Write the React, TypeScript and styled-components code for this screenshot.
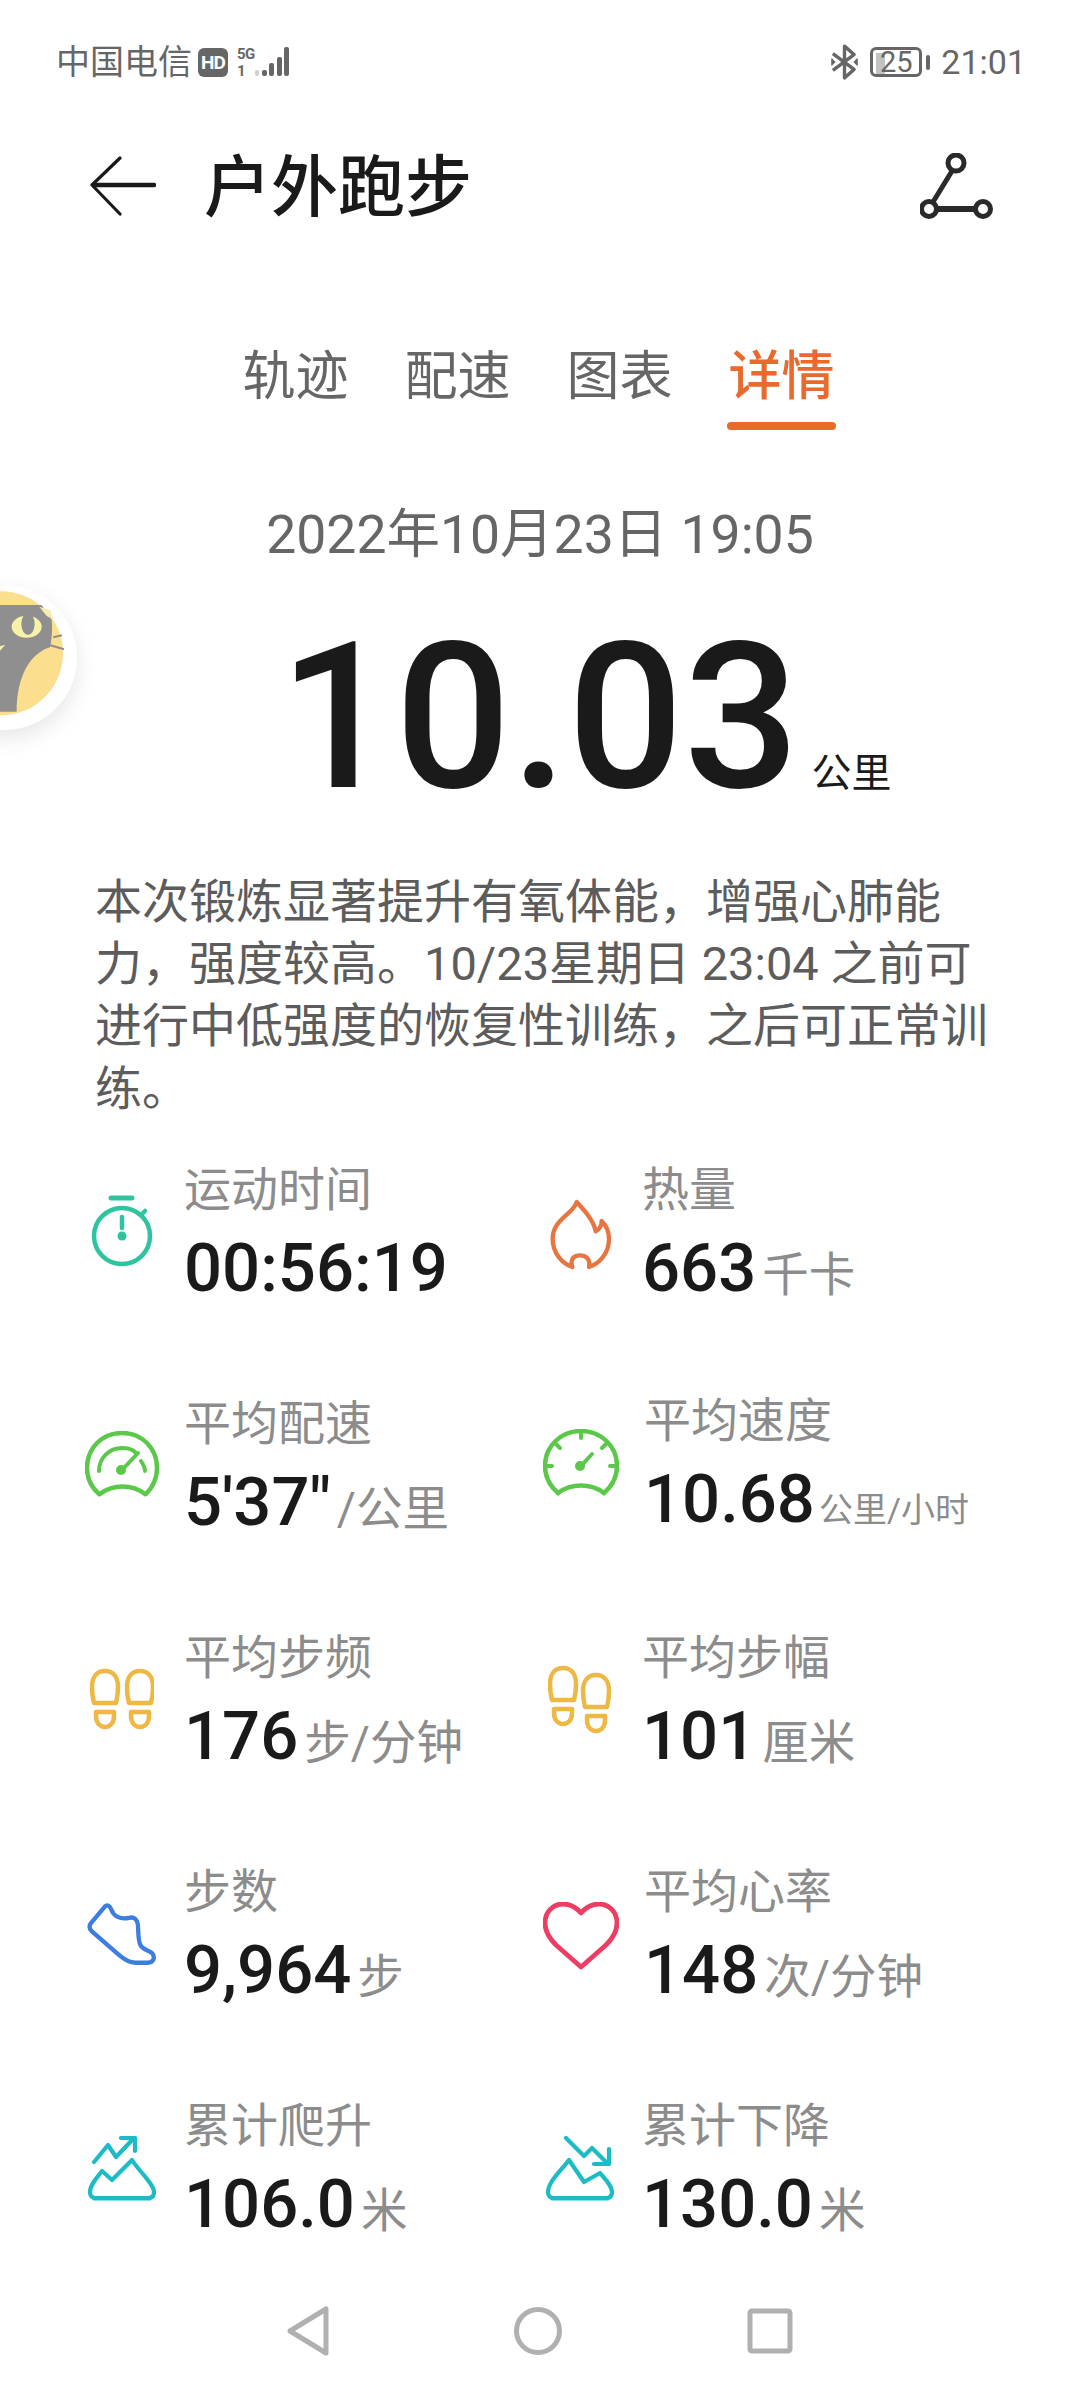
import React from 'react'
import styled, { createGlobalStyle } from 'styled-components'

const GlobalStyle = createGlobalStyle`
    html, body {
        margin: 0;
        padding: 0;
        background: #fff;
    }
    * {
        box-sizing: border-box;
    }
`

const CJK = `Roboto, "Noto Sans CJK SC", sans-serif`

const Page = styled.div`
    position: relative;
    display: flex;
    flex-direction: column;
    width: 1080px;
    height: 2388px;
    overflow: hidden;
    background: #fff;
    font-family: ${CJK};
`

const StatusBar = styled.div`
    display: flex;
    align-items: center;
    justify-content: space-between;
    height: 124px;
    padding: 0 54px 0 56px;
    color: #666;
`

const StatusGroup = styled.div`
    display: flex;
    align-items: center;
`

const Carrier = styled.span`
    font-size: 34px;
    line-height: 40px;
`

const HdBadge = styled.span`
    display: flex;
    align-items: center;
    justify-content: center;
    width: 30px;
    height: 29px;
    margin: 0 9px 0 6px;
    border-radius: 6px;
    background: #666;
    color: #fff;
    font-size: 19px;
    font-weight: 700;
    letter-spacing: -1px;
`

const NetworkStack = styled.span`
    display: flex;
    flex-direction: column;
    justify-content: space-between;
    height: 31px;
    font-size: 15px;
    line-height: 14px;
    font-weight: 700;
    letter-spacing: -0.5px;
`

const Battery = styled.span`
    position: relative;
    display: flex;
    align-items: center;
    justify-content: center;
    width: 52px;
    height: 30px;
    margin-left: 11px;
    border: 3px solid #666;
    border-radius: 6px;
    font-size: 29px;
    line-height: 24px;
`

const BatteryFill = styled.span`
    position: absolute;
    left: 3px;
    top: 3px;
    bottom: 0;
    width: 9px;
    background: #c2c2c2;
`

const BatteryLabel = styled.span`
    position: relative;
`

const BatteryNub = styled.span`
    width: 4px;
    height: 15px;
    margin-left: 4px;
    border-radius: 2px;
    background: #666;
`

const Clock = styled.span`
    margin-left: 11px;
    font-size: 34px;
    line-height: 40px;
`

const Header = styled.div`
    display: flex;
    align-items: center;
    height: 124px;
    padding: 0 86px 0 90px;
`

const Title = styled.h1`
    flex: 1;
    margin: 4px 0 0 48px;
    font-size: 67px;
    line-height: 80px;
    font-weight: 500;
    color: #1a1a1a;
`

const Tabs = styled.div`
    display: flex;
    justify-content: center;
    gap: 56px;
    margin-top: 92px;
    padding-right: 3px;
`

const Tab = styled.div<{ $active?: boolean }>`
    position: relative;
    height: 90px;
    font-size: 53px;
    line-height: 74px;
    font-weight: ${props => (props.$active ? 500 : 400)};
    color: ${props => (props.$active ? '#e96a2c' : '#666')};

    &::after {
        content: '';
        display: ${props => (props.$active ? 'block' : 'none')};
        position: absolute;
        left: -2px;
        right: -1px;
        bottom: 0;
        height: 8px;
        border-radius: 4px;
        background: #e96a2c;
    }
`

const DateLine = styled.div`
    margin-top: 70px;
    text-align: center;
    font-size: 53.5px;
    line-height: 70px;
    color: #666;
`

const Distance = styled.div`
    display: flex;
    align-items: baseline;
    margin-top: 28px;
    padding-left: 279px;
    height: 240px;
`

const DistanceValue = styled.span`
    font-size: 204px;
    line-height: 240px;
    font-weight: 500;
    color: #1a1a1a;
`

const DistanceUnit = styled.span`
    margin-left: 12px;
    font-size: 40px;
    color: #1a1a1a;
`

const Summary = styled.p`
    margin: 33px 0 0;
    padding: 0 86px 0 95px;
    font-size: 47px;
    line-height: 62.2px;
    color: #5c5c5c;
`

const Stats = styled.div`
    display: grid;
    grid-template-columns: 458px 458px;
    grid-template-rows: repeat(4, 234px) auto;
    margin-top: 40px;
    padding-left: 85px;
`

const Stat = styled.div`
    display: flex;
    align-items: flex-start;
    gap: 25px;
`

const IconSlot = styled.div<{ $top: number }>`
    display: flex;
    justify-content: center;
    flex: 0 0 74px;
    margin-top: ${props => props.$top}px;
`

const StatBody = styled.div<{ $shift?: number }>`
    margin-top: ${props => props.$shift ?? 0}px;
`

const StatLabel = styled.div`
    font-size: 47px;
    line-height: 60px;
    color: #8c8c8c;
`

const StatValueRow = styled.div`
    display: flex;
    align-items: baseline;
    margin-top: 8px;
    line-height: 80px;
`

const StatValue = styled.span`
    font-size: 67px;
    font-weight: 500;
    color: #1a1a1a;
`

const StatUnit = styled.span<{ $small?: boolean }>`
    margin-left: ${props => (props.$small ? 4 : 6)}px;
    font-size: ${props => (props.$small ? 34 : 46.5)}px;
    color: #8c8c8c;
`

const NavBar = styled.div`
    position: absolute;
    left: 0;
    right: 0;
    bottom: 32px;
    display: flex;
    justify-content: center;
    align-items: center;
    gap: 185px;
`

const FloatBall = styled.div`
    position: absolute;
    left: -68px;
    top: 585px;
    width: 145px;
    height: 145px;
    border-radius: 50%;
    background: #fff;
    box-shadow: 0 8px 22px rgba(0, 0, 0, 0.1);
    overflow: hidden;

    svg {
        display: block;
    }
`

const Stopwatch = () => (
    <svg width="62" height="72" viewBox="0 0 62 72" fill="none" stroke="#2ec4a0" strokeWidth="4.5" strokeLinecap="round">
        <path d="M20 3h21" strokeWidth="5" />
        <circle cx="31" cy="41" r="28" />
        <path d="M51 19l3-3" />
        <path d="M31 22v11" />
        <circle cx="31" cy="41" r="4.5" fill="#2ec4a0" stroke="none" />
    </svg>
)

const Flame = () => (
    <svg width="70" height="76" viewBox="75 130 210 228" fill="none" stroke="#e8743f" strokeWidth="13" strokeLinejoin="round" strokeLinecap="round">
        <path d="M170 148C160 185 98 200 98 258C98 300 125 332 157 343C150 322 160 308 180 308C200 308 212 322 207 343C240 332 267 300 267 258C267 235 258 218 245 205C245 220 238 230 227 236C222 205 195 175 170 148Z" />
    </svg>
)

const GaugeBold = () => (
    <svg width="74" height="68" viewBox="0 0 74 68" fill="none" stroke="#5bc84a" strokeLinecap="round">
        <path d="M14 63C6 56 2 47 2 37C2 17 17 2 37 2C57 2 72 17 72 37C72 47 68 56 61 63" strokeWidth="4.5" />
        <path d="M15 63C28 53 47 53 60 63" strokeWidth="4.5" />
        <path d="M14 40C14 27 24 17 37 17C42 17 47 18 50 21" strokeWidth="4" />
        <path d="M56 30C58 33 60 36 60 40" strokeWidth="4" />
        <path d="M37 39L53 22" strokeWidth="4" />
        <circle cx="36" cy="39" r="5" fill="#5bc84a" stroke="none" />
    </svg>
)

const GaugeThin = () => (
    <svg width="76" height="68" viewBox="0 0 76 68" fill="none" stroke="#5bc84a" strokeLinecap="round">
        <path d="M15 64C7 57 2 47 2 37C2 17 18 2 38 2C58 2 74 17 74 37C74 47 69 57 61 64" strokeWidth="4.5" />
        <path d="M15 64C28 54 48 54 61 64" strokeWidth="4.5" />
        <path d="M38 3v6M13 15l4 4M63 15l-4 4M3 37h6M73 37h-6" strokeWidth="4" />
        <path d="M38 37L49 25" strokeWidth="4" />
        <circle cx="37" cy="37" r="5" fill="#5bc84a" stroke="none" />
    </svg>
)

const Foot = ({ x, y }: { x: number; y: number }) => (
    <g transform={`translate(${x} ${y})`}>
        <path d="M3 34H25C26 30 27 25 27 18C27 8 22 2 14 2C6 2 1 8 1 18C1 25 2 30 3 34Z" />
        <path d="M5 43H23V47C23 54 19 58 14 58C9 58 5 54 5 47Z" />
    </g>
)

const FootprintsLevel = () => (
    <svg width="64" height="64" viewBox="0 0 64 64" fill="none" stroke="#edb843" strokeWidth="4.5" strokeLinejoin="round">
        <Foot x={1} y={2} />
        <Foot x={36} y={2} />
    </svg>
)

const FootprintsStaggered = () => (
    <svg width="64" height="72" viewBox="0 0 64 72" fill="none" stroke="#edb843" strokeWidth="4.5" strokeLinejoin="round">
        <Foot x={1} y={2} />
        <Foot x={34} y={9} />
    </svg>
)

const Shoe = () => (
    <svg width="72" height="64" viewBox="75 785 218 192" fill="none" stroke="#3b7de0" strokeWidth="13" strokeLinejoin="round" strokeLinecap="round">
        <path d="M90 848L132 798C140 790 148 796 152 808C158 826 178 838 205 832C222 828 230 838 232 852C234 876 232 900 240 915C248 930 262 928 274 938C286 950 280 968 262 968H225C205 968 190 958 172 942L92 872C84 864 84 856 90 848Z" />
    </svg>
)

const Heart = () => (
    <svg width="76" height="68" viewBox="0 0 76 68" fill="none" stroke="#ee3d63" strokeWidth="4.8" strokeLinejoin="round">
        <path d="M38 11C33 5 27 2 20 2C10 2 2 10 2 21C2 30 7 37 13 43L38 65L63 43C69 37 74 30 74 21C74 10 66 2 56 2C49 2 43 5 38 11Z" />
    </svg>
)

const MountainUp = () => (
    <svg width="68" height="66" viewBox="0 0 68 66" fill="none" stroke="#1dbbc5" strokeWidth="4.2" strokeLinecap="round" strokeLinejoin="round">
        <path d="M6 26L20 9L28 21L46 2" />
        <path d="M33 2H47V15" />
        <path d="M2 56C2 49 8 43 14 35L24 44L44 24C50 34 66 48 66 56C66 60 64 62 60 62H8C4 62 2 60 2 56Z" />
        <path d="M6 63H62" strokeWidth="3" />
    </svg>
)

const MountainDown = () => (
    <svg width="68" height="66" viewBox="0 0 68 66" fill="none" stroke="#1dbbc5" strokeWidth="4.2" strokeLinecap="round" strokeLinejoin="round">
        <path d="M20 2L38 20L46 12L62 28" />
        <path d="M48 28H63V13" />
        <path d="M2 56C2 46 14 36 23 24L38 46L54 37C60 44 66 50 66 56C66 60 64 62 60 62H8C4 62 2 60 2 56Z" />
        <path d="M6 63H62" strokeWidth="3" />
    </svg>
)

const BackArrow = () => (
    <svg width="66" height="60" viewBox="0 0 66 60" fill="none" stroke="#1a1a1a" strokeLinecap="round" strokeLinejoin="round">
        <path d="M30 2L2 29L30 58" strokeWidth="3.2" />
        <path d="M4 29H64" strokeWidth="4.6" />
    </svg>
)

const RouteIcon = () => (
    <svg width="74" height="66" viewBox="0 0 74 66" fill="none" stroke="#2a2a2a" strokeWidth="5">
        <circle cx="36" cy="10" r="8" />
        <circle cx="9" cy="56" r="7.5" />
        <circle cx="63" cy="56" r="7.5" />
        <path d="M32 18L13 49" />
        <path d="M17 56H55" strokeWidth="6" />
    </svg>
)

const SignalBars = () => (
    <svg width="34" height="32" viewBox="0 0 34 32" fill="#666">
        <rect x="0" y="24" width="4" height="6" rx="2" fill="#cfcfcf" />
        <rect x="7" y="24" width="5" height="6" rx="2" />
        <rect x="14" y="17" width="5" height="13" rx="2" />
        <rect x="22" y="11" width="5" height="19" rx="2" />
        <rect x="29" y="1" width="5" height="29" rx="2" />
    </svg>
)

const Bluetooth = () => (
    <svg width="29" height="36" viewBox="0 0 26 34" fill="none" stroke="#666" strokeWidth="3.2" strokeLinejoin="round">
        <path d="M2 9L22 24L13 32V2L22 10L2 25" />
        <path d="M1 14l3 3l-3 3z" fill="#666" strokeWidth="1" />
        <path d="M25 14l-3 3l3 3z" fill="#666" strokeWidth="1" />
    </svg>
)

const NavBack = () => (
    <svg width="42" height="50" viewBox="0 0 42 50" fill="none" stroke="#b0b0b0" strokeWidth="5" strokeLinejoin="round">
        <path d="M39 3V47L3 25Z" />
    </svg>
)

const NavHome = () => (
    <svg width="48" height="50" viewBox="0 0 48 50" fill="none" stroke="#b0b0b0" strokeWidth="5">
        <circle cx="24" cy="25" r="21.5" />
    </svg>
)

const NavRecent = () => (
    <svg width="46" height="46" viewBox="0 0 46 46" fill="none" stroke="#b0b0b0" strokeWidth="5" strokeLinejoin="round">
        <rect x="3" y="3" width="40" height="40" rx="2" />
    </svg>
)

const CatBadge = () => (
    <svg width="145" height="145" viewBox="-204 75 435 435">
        <circle cx="3" cy="280" r="186" fill="#fbdf8e" />
        <path d="M-204 135H125L155 180C158 210 155 240 150 262C90 280 50 350 50 455H-204Z" fill="#8f8f8f" />
        <path d="M118 140L150 150L160 178L140 168Z" fill="#f7ecb0" />
        <ellipse cx="80" cy="200" rx="45" ry="33" fill="#f8f2a8" />
        <ellipse cx="84" cy="192" rx="20" ry="33" fill="#8f8f8f" />
        <path d="M160 232L186 226M148 255L192 268" stroke="#8f8f8f" strokeWidth="6" />
        <path d="M-10 262L16 254L0 272Z" fill="#f8f2a8" />
    </svg>
)

type StatItem = {
    label: string
    value: string
    unit?: string
    smallUnit?: boolean
    icon: React.ReactNode
    top: number
    shift?: number
}

const stats: StatItem[] = [
    { label: '运动时间', value: '00:56:19', icon: <Stopwatch />, top: 35 },
    { label: '热量', value: '663', unit: '千卡', icon: <Flame />, top: 36 },
    { label: '平均配速', value: `5'37"`, unit: '/公里', icon: <GaugeBold />, top: 37 },
    { label: '平均速度', value: '10.68', unit: '公里/小时', smallUnit: true, icon: <GaugeThin />, top: 35, shift: -3 },
    { label: '平均步频', value: '176', unit: '步/分钟', icon: <FootprintsLevel />, top: 39 },
    { label: '平均步幅', value: '101', unit: '厘米', icon: <FootprintsStaggered />, top: 36 },
    { label: '步数', value: '9,964', unit: '步', icon: <Shoe />, top: 40 },
    { label: '平均心率', value: '148', unit: '次/分钟', icon: <Heart />, top: 40 },
    { label: '累计爬升', value: '106.0', unit: '米', icon: <MountainUp />, top: 40 },
    { label: '累计下降', value: '130.0', unit: '米', icon: <MountainDown />, top: 40 },
]

const App = () => (
    <Page>
        <GlobalStyle />
        <StatusBar>
            <StatusGroup>
                <Carrier>中国电信</Carrier>
                <HdBadge>HD</HdBadge>
                <NetworkStack>
                    <span>5G</span>
                    <span>1</span>
                </NetworkStack>
                <SignalBars />
            </StatusGroup>
            <StatusGroup>
                <Bluetooth />
                <Battery>
                    <BatteryFill />
                    <BatteryLabel>25</BatteryLabel>
                </Battery>
                <BatteryNub />
                <Clock>21:01</Clock>
            </StatusGroup>
        </StatusBar>

        <Header>
            <BackArrow />
            <Title>户外跑步</Title>
            <RouteIcon />
        </Header>

        <Tabs>
            <Tab>轨迹</Tab>
            <Tab>配速</Tab>
            <Tab>图表</Tab>
            <Tab $active>详情</Tab>
        </Tabs>

        <DateLine>2022年10月23日 19:05</DateLine>

        <Distance>
            <DistanceValue>10.03</DistanceValue>
            <DistanceUnit>公里</DistanceUnit>
        </Distance>

        <Summary>
            本次锻炼显著提升有氧体能，增强心肺能力，强度较高。10/23星期日 23:04 之前可进行中低强度的恢复性训练，之后可正常训练。
        </Summary>

        <Stats>
            {stats.map(item => (
                <Stat key={item.label}>
                    <IconSlot $top={item.top}>{item.icon}</IconSlot>
                    <StatBody $shift={item.shift}>
                        <StatLabel>{item.label}</StatLabel>
                        <StatValueRow>
                            <StatValue>{item.value}</StatValue>
                            {item.unit && <StatUnit $small={item.smallUnit}>{item.unit}</StatUnit>}
                        </StatValueRow>
                    </StatBody>
                </Stat>
            ))}
        </Stats>

        <NavBar>
            <NavBack />
            <NavHome />
            <NavRecent />
        </NavBar>

        <FloatBall>
            <CatBadge />
        </FloatBall>
    </Page>
)

export default App
